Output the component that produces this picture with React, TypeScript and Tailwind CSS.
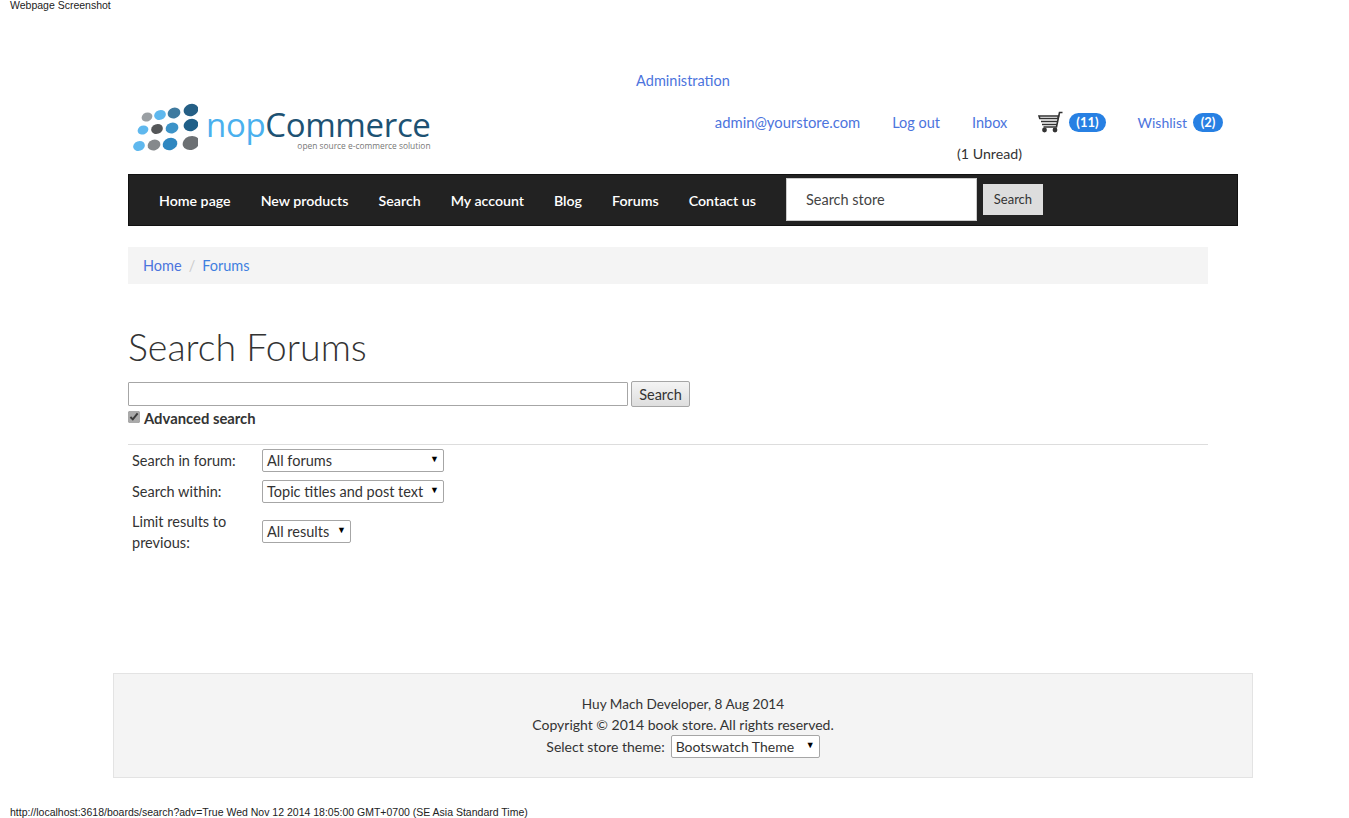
import React from 'react';

const navLinks = ['Home page', 'New products', 'Search', 'My account', 'Blog', 'Forums', 'Contact us'];

const dots = [
  { cx: 19, cy: 17, rx: 5.5, fill: '#9a9fa3' },
  { cx: 32, cy: 15, rx: 6, fill: '#5fb8ee' },
  { cx: 46, cy: 13, rx: 6.5, fill: '#3f7a9f' },
  { cx: 63, cy: 10, rx: 7.5, fill: '#255f85' },
  { cx: 15, cy: 30, rx: 5.5, fill: '#5fb8ee' },
  { cx: 29, cy: 29, rx: 6, fill: '#555759' },
  { cx: 44, cy: 28, rx: 6.5, fill: '#3c93c8' },
  { cx: 63, cy: 25, rx: 7.5, fill: '#1f5f88' },
  { cx: 11, cy: 46, rx: 6, fill: '#5fb8ee' },
  { cx: 26, cy: 45, rx: 6.5, fill: '#85898c' },
  { cx: 42, cy: 44, rx: 7.5, fill: '#2f87c0' },
  { cx: 63, cy: 43, rx: 8.5, fill: '#6c7073' },
];

function LogoDots() {
  return (
    <svg width="70" height="56" viewBox="0 0 70 56" className="shrink-0">
      {dots.map((d) => (
        <ellipse
          key={`${d.cx}-${d.cy}`}
          cx={d.cx}
          cy={d.cy}
          rx={d.rx}
          ry={d.rx * 0.8}
          fill={d.fill}
          transform={`rotate(-20 ${d.cx} ${d.cy})`}
        />
      ))}
    </svg>
  );
}

function CartIcon() {
  return (
    <svg width="25" height="22" viewBox="0 0 25 22" fill="none" stroke="#333" strokeWidth="1.6">
      <path d="M24.5 1.5h-3L18.5 16H5.5" />
      <path d="M1 5h19.5L20 7.5H1.8zM3 10.5h16.5M4 13.5h15" />
      <circle cx="6.5" cy="19" r="1.6" fill="#333" />
      <circle cx="17" cy="19" r="1.6" fill="#333" />
    </svg>
  );
}

function Badge({ children }: { children: React.ReactNode }) {
  return (
    <span className="ml-[6px] inline-flex h-[19px] min-w-[30px] items-center justify-center rounded-[10px] bg-[#2780e3] px-[7px] text-[13px] font-bold text-white">
      {children}
    </span>
  );
}

function FakeSelect({ label, width }: { label: string; width: string }) {
  return (
    <div className={`relative flex h-[23px] items-center rounded-[2px] border border-[#a6a6a6] bg-white pl-1 ${width}`}>
      {label}
      <span className="absolute right-[4px] top-[4px] text-[9px] leading-[9px] text-black">▼</span>
    </div>
  );
}

export default function App() {
  return (
    <div className="relative h-[818px] overflow-hidden bg-white font-['Lato','Noto_Sans',sans-serif] text-[14.5px] leading-[21px] text-[#333]">
      <div className="absolute left-[10px] top-0 font-['Liberation_Sans',sans-serif] text-[10.5px] leading-[10px] text-[#222]">
        Webpage Screenshot
      </div>

      <div className="ml-[128px] w-[1110px] pt-[70px]">
        <div className="text-center text-[#4c74dd]">Administration</div>

        <div className="flex h-[83px]">
          <div className="flex w-[310px] items-start pt-[9px]">
            <LogoDots />
            <div className="ml-[8px] flex flex-col font-['Open_Sans',sans-serif]">
              <div className="mt-[7px] text-[33px] leading-[36px] tracking-[-0.35px]">
                <span className="text-[#4ab0ee]">nop</span>
                <span className="text-[#1d5273]">Commerce</span>
              </div>
              <div className="-mt-[1px] text-right text-[8.4px] leading-[8px] text-[#777]">open source e-commerce solution</div>
            </div>
          </div>

          <div className="ml-auto flex flex-col items-end pt-[17px] pr-[15px]">
            <div className="flex h-[28px] items-center text-[#4c74dd]">
              <span className="text-[14.8px]">admin@yourstore.com</span>
              <span className="ml-[32px]">Log out</span>
              <span className="ml-[32px]">Inbox</span>
              <span className="ml-[31px] flex items-center">
                <CartIcon />
                <Badge>(11)</Badge>
              </span>
              <span className="ml-[32px] flex items-center text-[14px]">
                Wishlist
                <Badge>(2)</Badge>
              </span>
            </div>
            <div className="mr-[201px] mt-[7px] text-[14.2px]">(1 Unread)</div>
          </div>
        </div>

        <div className="flex h-[52px] items-center border border-[#111] bg-[#222] pl-[30px]">
          <div className="flex gap-[30px] text-[14.2px] font-semibold text-white">
            {navLinks.map((link) => (
              <span key={link}>{link}</span>
            ))}
          </div>
          <div className="ml-[30px] -mt-px flex h-[43px] w-[191px] items-center border border-[#ccc] bg-white pl-[19px] text-[#444]">
            Search store
          </div>
          <div className="ml-[6px] -mt-px flex h-[31px] w-[60px] items-center justify-center bg-[#ddd] text-[13px] text-[#333]">
            Search
          </div>
        </div>

        <div className="mt-[21px] flex h-[37px] w-[1080px] items-center bg-[#f4f4f4] px-[15px]">
          <span className="text-[#4c74dd]">Home</span>
          <span className="px-[7px] text-[#ccc]">/</span>
          <span className="text-[#3f80e0]">Forums</span>
        </div>

        <div className="w-[1080px]">
          <h1 className="mt-[38px] h-[50px] text-[37.5px] leading-[50px] font-light text-[#333]">Search Forums</h1>

          <div className="mt-[9px] flex h-[26px] items-center">
            <div className="h-[24px] w-[500px] rounded-[1px] border border-[#a6a6a6] bg-white" />
            <div className="ml-[3px] flex h-[26px] w-[59px] items-center justify-center rounded-[2px] border border-[#a6a6a6] bg-gradient-to-b from-[#f4f4f4] to-[#dedede]">
              Search
            </div>
          </div>

          <label className="mt-[1px] flex h-[21px] items-center">
            <input type="checkbox" defaultChecked className="mb-[3px] h-3 w-3 accent-[#aaa]" />
            <span className="ml-1 text-[14.8px] font-bold">Advanced search</span>
          </label>

          <div className="mt-[15px] border-t border-[#ddd] pl-1 pt-1">
            <div className="flex h-[23px] items-center">
              <span className="w-[130px]">Search in forum:</span>
              <FakeSelect label="All forums" width="w-[182px]" />
            </div>
            <div className="mt-2 flex h-[23px] items-center">
              <span className="w-[130px]">Search within:</span>
              <FakeSelect label="Topic titles and post text" width="w-[182px]" />
            </div>
            <div className="mt-2 flex items-center">
              <span className="w-[130px]">Limit results to previous:</span>
              <div className="-mt-[2px]">
                <FakeSelect label="All results" width="w-[89px]" />
              </div>
            </div>
          </div>
        </div>
      </div>

      <div className="absolute left-[113px] top-[673px] flex h-[105px] w-[1140px] flex-col items-center border border-[#e3e3e3] bg-[#f4f4f4] pt-[20px] text-[14px]">
        <div className="text-[13.6px]">Huy Mach Developer, 8 Aug 2014</div>
        <div className="-mt-px">Copyright © 2014 book store. All rights reserved.</div>
        <div className="flex items-center">
          Select store theme:
          <div className="ml-[6px]">
            <FakeSelect label="Bootswatch Theme" width="w-[149px]" />
          </div>
        </div>
      </div>

      <div className="absolute left-[10px] top-[807px] font-['Liberation_Sans',sans-serif] text-[10.5px] leading-[11px] text-[#222]">
        http://localhost:3618/boards/search?adv=True Wed Nov 12 2014 18:05:00 GMT+0700 (SE Asia Standard Time)
      </div>
    </div>
  );
}
